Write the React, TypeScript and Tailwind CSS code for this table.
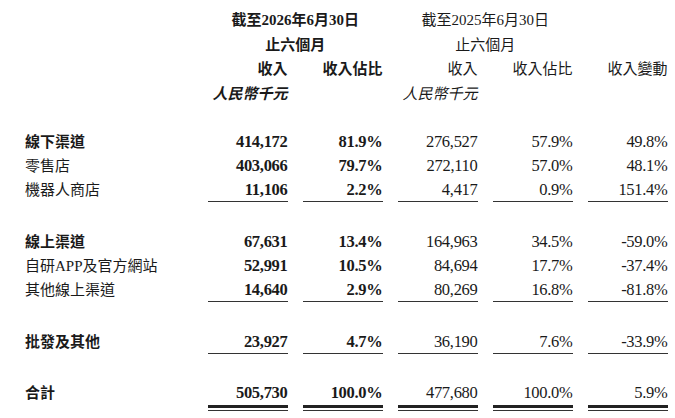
type Row = { label: string; v: string[]; strong?: boolean };

const groups: Row[][] = [
  [
    { label: "線下渠道", v: ["414,172", "81.9%", "276,527", "57.9%", "49.8%"], strong: true },
    { label: "零售店", v: ["403,066", "79.7%", "272,110", "57.0%", "48.1%"] },
    { label: "機器人商店", v: ["11,106", "2.2%", "4,417", "0.9%", "151.4%"] },
  ],
  [
    { label: "線上渠道", v: ["67,631", "13.4%", "164,963", "34.5%", "-59.0%"], strong: true },
    { label: "自研APP及官方網站", v: ["52,991", "10.5%", "84,694", "17.7%", "-37.4%"] },
    { label: "其他線上渠道", v: ["14,640", "2.9%", "80,269", "16.8%", "-81.8%"] },
  ],
  [{ label: "批發及其他", v: ["23,927", "4.7%", "36,190", "7.6%", "-33.9%"], strong: true }],
];

const total: Row = { label: "合計", v: ["505,730", "100.0%", "477,680", "100.0%", "5.9%"], strong: true };

const grid = "grid grid-cols-[167.5px_repeat(5,79.5px)] gap-x-[15.5px]";
const num = "text-right text-[16.5px] tracking-[-0.3px]";

function DataRow({ row, last }: { row: Row; last: boolean }) {
  return (
    <>
      <div className={`h-[24px] leading-[24px] text-[15px] ${row.strong ? "font-bold" : ""}`}>{row.label}</div>
      {row.v.map((v, i) => (
        <div
          key={i}
          className={`h-[24px] leading-[24px] ${num} ${i < 2 ? "font-bold" : ""} ${last ? "border-b border-[#333]" : ""}`}
        >
          {v}
        </div>
      ))}
    </>
  );
}

export default function App() {
  return (
    <div className="w-[675px] h-[418px] bg-white text-[#1a1a1a] pt-[8px] pl-[25px] font-['Liberation_Serif','Noto_Sans_CJK_TC',serif] overflow-hidden">
      {/* header */}
      <div className={`${grid} text-[15px] leading-[24.5px]`}>
        <div />
        <div className="col-span-2 text-center font-bold">截至2026年6月30日</div>
        <div className="col-span-2 text-center">截至2025年6月30日</div>
        <div />

        <div />
        <div className="col-span-2 text-center font-bold">止六個月</div>
        <div className="col-span-2 text-center">止六個月</div>
        <div />

        <div />
        <div className="text-right font-bold">收入</div>
        <div className="text-right font-bold">收入佔比</div>
        <div className="text-right">收入</div>
        <div className="text-right">收入佔比</div>
        <div className="text-right">收入變動</div>

        <div />
        <div className="text-right font-bold italic">人民幣千元</div>
        <div />
        <div className="text-right italic">人民幣千元</div>
        <div />
        <div />
      </div>

      {groups.map((g, gi) => (
        <div key={gi} className={`${grid} ${gi === 0 ? "mt-[23.5px]" : "mt-[28px]"}`}>
          {g.map((r, ri) => (
            <DataRow key={ri} row={r} last={ri === g.length - 1} />
          ))}
        </div>
      ))}

      {/* total with double rule */}
      <div className={`${grid} mt-[27px]`}>
        <div className="h-[24px] leading-[24px] text-[15px] font-bold">{total.label}</div>
        {total.v.map((v, i) => (
          <div key={i} className="flex flex-col">
            <div className={`h-[24px] leading-[24px] ${num} ${i < 2 ? "font-bold" : ""}`}>{v}</div>
            <div className="h-[3px] bg-[#222]" />
            <div className="mt-[2px] h-[1.5px] bg-[#333]" />
          </div>
        ))}
      </div>
    </div>
  );
}
